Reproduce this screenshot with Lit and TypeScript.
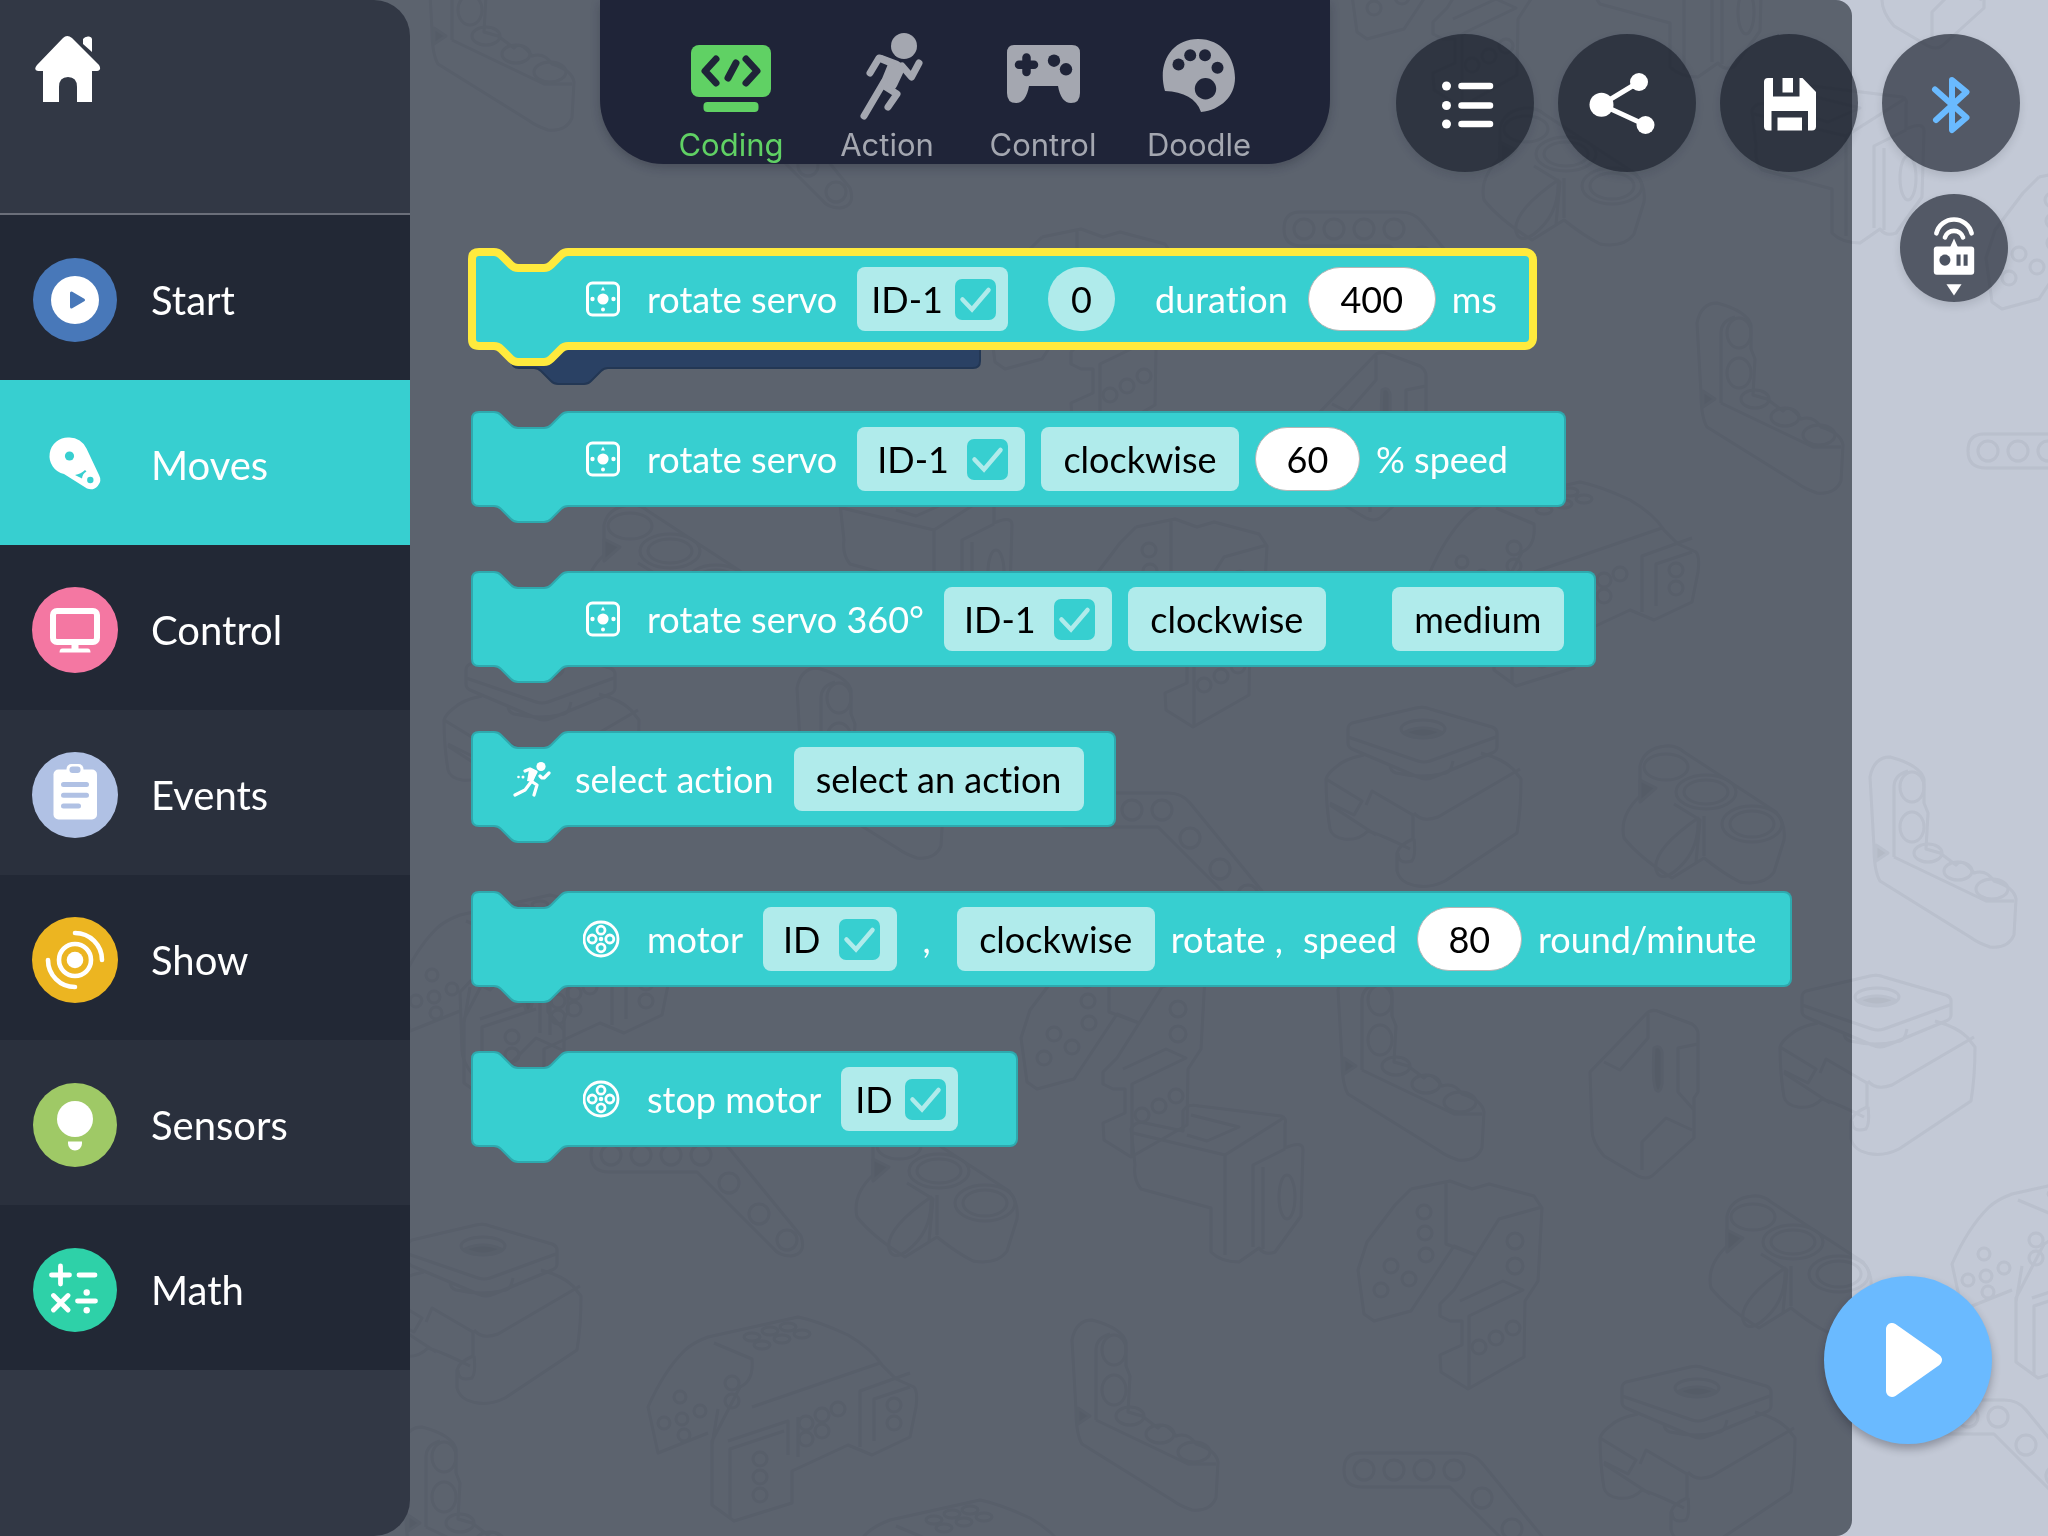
import { LitElement, html, css, svg, nothing } from "lit";
import type { TemplateResult } from "lit";
import { classMap } from "lit/directives/class-map.js";

/* ---------- data ---------- */

type Piece =
  | { kind: "label"; text: string }
  | { kind: "port"; text: string; name: string; size?: string }
  | { kind: "choice"; value: string; options: string[]; name: string; apart?: boolean }
  | { kind: "number"; value: string; name: string; wide?: boolean }
  | { kind: "angle"; value: string };

interface Block {
  icon: "servo" | "motor" | "runner";
  end: "narrow" | "wide" | "wider";
  selected?: boolean;
  pieces: Piece[];
}

const TURN = ["clockwise", "counterclockwise"];

const BLOCKS: Block[] = [
  {
    icon: "servo", end: "narrow", selected: true,
    pieces: [
      { kind: "label", text: "rotate servo" },
      { kind: "port", text: "ID-1", name: "Servo", size: "tight" },
      { kind: "angle", value: "0" },
      { kind: "label", text: "duration" },
      { kind: "number", value: "400", name: "Duration", wide: true },
      { kind: "label", text: "ms" },
    ],
  },
  {
    icon: "servo", end: "wide",
    pieces: [
      { kind: "label", text: "rotate servo" },
      { kind: "port", text: "ID-1", name: "Servo" },
      { kind: "choice", value: "clockwise", options: TURN, name: "Direction" },
      { kind: "number", value: "60", name: "Speed" },
      { kind: "label", text: "% speed" },
    ],
  },
  {
    icon: "servo", end: "narrow",
    pieces: [
      { kind: "label", text: "rotate servo 360°" },
      { kind: "port", text: "ID-1", name: "Servo" },
      { kind: "choice", value: "clockwise", options: TURN, name: "Direction" },
      { kind: "choice", value: "medium", options: ["medium"], name: "Speed", apart: true },
    ],
  },
  {
    icon: "runner", end: "narrow",
    pieces: [
      { kind: "label", text: "select action" },
      { kind: "choice", value: "select an action", options: ["select an action"], name: "Action" },
    ],
  },
  {
    icon: "motor", end: "narrow",
    pieces: [
      { kind: "label", text: "motor" },
      { kind: "port", text: "ID", name: "Motor" },
      { kind: "label", text: "," },
      { kind: "choice", value: "clockwise", options: TURN, name: "Direction" },
      { kind: "label", text: "rotate ," },
      { kind: "label", text: "speed" },
      { kind: "number", value: "80", name: "Speed" },
      { kind: "label", text: "round/minute" },
    ],
  },
  {
    icon: "motor", end: "wider",
    pieces: [
      { kind: "label", text: "stop motor" },
      { kind: "port", text: "ID", name: "Motor", size: "tight" },
    ],
  },
];

/* ---------- category icons ---------- */

const CATEGORIES: { name: string; tone: string; art: TemplateResult }[] = [
  {
    name: "Start", tone: "dark",
    art: svg`<circle cx="43" cy="43" r="42" fill="#4878b9"/><circle cx="43" cy="43" r="24" fill="#fff"/>
      <path d="M39.500 36v14l12-7z" fill="#4878b9" stroke="#4878b9" stroke-width="3" stroke-linejoin="round"/>`,
  },
  {
    name: "Moves", tone: "active",
    art: svg`<path d="M37.500 15.500a18.500 18.500 0 0 1 17 11L67 53a9.600 9.600 0 0 1-12 13.500L32 52a18.500 18.500 0 0 1 5.500-36.500z" fill="#fff"/>
      <circle cx="37.500" cy="34" r="4.600" fill="#37cfd0"/><circle cx="58.300" cy="58" r="3.200" fill="#37cfd0"/>
      <path d="M43 53q6-1 10-5l1.500 1.500q-4 2-4.500 7z" fill="#37cfd0"/>`,
  },
  {
    name: "Control", tone: "dark",
    art: svg`<circle cx="43" cy="43" r="43" fill="#f477a2"/>
      <rect x="21" y="24" width="44" height="31" rx="4" fill="none" stroke="#fff" stroke-width="6"/>
      <path d="M39.500 58h7v3.500h9q3 0 3 4h-31q0-4 3-4h9z" fill="#fff"/>`,
  },
  {
    name: "Events", tone: "soft",
    art: svg`<circle cx="43" cy="43" r="43" fill="#b0c1e4"/>
      <rect x="21.500" y="17.500" width="43.500" height="50" rx="5" fill="#fff"/><rect x="34.500" y="12" width="17" height="14" rx="5" fill="#fff"/>
      <rect x="37.500" y="14.500" width="11" height="6.500" rx="3" fill="#b0c1e4"/>
      <path d="M31.500 32.500h23M31.500 43.300h23M31.500 54h15" stroke="#b0c1e4" stroke-width="5" stroke-linecap="round"/>`,
  },
  {
    name: "Show", tone: "dark",
    art: svg`<circle cx="43" cy="43" r="43" fill="#ecb521"/><circle cx="43" cy="43" r="8.300" fill="#fff"/>
      <g fill="none" stroke="#fff" stroke-width="4.600" stroke-linecap="round"><circle cx="43" cy="43" r="16"/>
      <path d="M43 16a27 27 0 0 1 27 27M43 70a27 27 0 0 1-27-27"/></g>`,
  },
  {
    name: "Sensors", tone: "soft",
    art: svg`<circle cx="43" cy="43" r="42" fill="#9fc966"/><circle cx="43" cy="37" r="18" fill="#fff"/>
      <path d="M36 59.500h14v2a7 7 0 0 1-14 0z" fill="#fff"/>`,
  },
  {
    name: "Math", tone: "dark",
    art: svg`<circle cx="43" cy="43" r="42" fill="#2ed1a8"/>
      <path d="M19.500 28h18M28.500 19v18M47 28h16M21.500 48.500l14.500 14.500M36 48.500L21.500 63M45.500 54h18" stroke="#fff" stroke-width="4.800" stroke-linecap="round"/>
      <circle cx="54.700" cy="45.500" r="3.200" fill="#fff"/><circle cx="54.700" cy="63.300" r="3.200" fill="#fff"/>`,
  },
];

/* ---------- mode tabs ---------- */

const MODES: { name: string; art: TemplateResult }[] = [
  {
    name: "Coding",
    art: svg`<rect x="0" y="15" width="80" height="52" rx="8" fill="currentColor"/>
      <rect x="12.500" y="72" width="55" height="10" rx="4" fill="currentColor"/>
      <path d="M25 29L14 41l11 12M55 29l11 12-11 12M45 33l-8 15" fill="none" stroke="#1f2438" stroke-width="7" stroke-linecap="round" stroke-linejoin="round"/>`,
  },
  {
    name: "Action",
    art: svg`<circle cx="57" cy="16" r="13" fill="currentColor"/>
      <path d="M30 26q2-2 5-1l16 6q6 3 7 8l-8 17q-3 6-9 4l-9-4 9-22z" fill="currentColor"/>
      <path d="M23 43l9-15 12 5M55 36l9.500 11L72 33M37 52L17 86M39 57l11 7-9 13" fill="none" stroke="currentColor" stroke-width="7" stroke-linecap="round" stroke-linejoin="round"/>`,
  },
  {
    name: "Control",
    art: svg`<path fill="currentColor" d="M11 15h58q8 0 8 8v40q0 10-9 10-10 0-13-17H26q-3 17-13 17-9 0-9-10V23q0-8 7-8z"/>
      <path d="M23.500 27.500v14.500M16 34.700h15" stroke="#1f2438" stroke-width="8.500" stroke-linecap="round"/>
      <circle cx="51" cy="30.700" r="6.200" fill="#1f2438"/><circle cx="63" cy="39.300" r="6.200" fill="#1f2438"/>`,
  },
  {
    name: "Doodle",
    art: svg`<path fill="currentColor" d="M6 61C-2 34 12 9 39 9c24 0 37 19 37 39 0 18-14 32-34 34-5-14-17-20-36-21z"/>
      <g fill="#1f2438"><circle cx="19.500" cy="34.500" r="6"/><circle cx="31.200" cy="25.300" r="6"/><circle cx="46" cy="25.300" r="6"/><circle cx="58.500" cy="37.700" r="6"/><circle cx="46.500" cy="58.700" r="10.700"/></g>`,
  },
];

/* ---------- round toolbar buttons ---------- */

const TOOLS: { name: string; art: TemplateResult }[] = [
  {
    name: "Project list",
    art: svg`<g fill="#fff"><circle cx="50.500" cy="52" r="4.500"/><circle cx="50.500" cy="71.500" r="4.500"/><circle cx="50.500" cy="90" r="4.500"/></g>
      <path d="M65.500 52h28.500M65.500 71.500h28.500M65.500 90h28.500" stroke="#fff" stroke-width="6.500" stroke-linecap="round"/>`,
  },
  {
    name: "Share",
    art: svg`<path d="M81 48L43.500 70.700 87.500 91" fill="none" stroke="#fff" stroke-width="5"/>
      <g fill="#fff"><circle cx="43.500" cy="70.700" r="12"/><circle cx="81" cy="48" r="9"/><circle cx="87.500" cy="91" r="9"/></g>`,
  },
  {
    name: "Save",
    art: svg`<path fill="#fff" fill-rule="evenodd" d="M48 44h5v18.500h26.500V44h3L96 58v34.500q0 4-4 4h-4V77H51.500v19.500H48q-4 0-4-4V48q0-4 4-4zM62.500 44h10.500v14.500H62.500zM57.500 83.500h24.500v13H57.500z"/>`,
  },
  {
    name: "Bluetooth",
    art: svg`<path d="M53 55.500L84.500 83.500 70 96V46L84.500 58 54 86" fill="none" stroke="#6abaff" stroke-width="6" stroke-linecap="round" stroke-linejoin="round"/>`,
  },
];

/* ---------- block icons ---------- */

const BLOCK_ICONS: Record<Block["icon"], TemplateResult> = {
  servo: svg`<rect x="4.500" y="4" width="31" height="32" rx="5" fill="none" stroke="#fff" stroke-width="3"/>
    <g fill="#fff"><circle cx="20" cy="20" r="5.600"/><circle cx="9.500" cy="20" r="2.200"/><circle cx="30.500" cy="20" r="2.200"/><circle cx="20" cy="30.500" r="2"/><path d="M20 7.500l2 4h-4z"/></g>`,
  motor: svg`<g fill="none" stroke="#fff" stroke-width="2.800"><circle cx="18" cy="20" r="17"/>
    <circle cx="18" cy="11.200" r="4"/><circle cx="18" cy="28.800" r="4"/><circle cx="9.200" cy="20" r="4"/><circle cx="26.800" cy="20" r="4"/></g><circle cx="18" cy="20" r="2.300" fill="#fff"/>`,
  runner: svg`<circle cx="30" cy="7.500" r="4.600" fill="#fff"/>
    <path d="M14 12l5-2 6 3-5 9 6 4-3 10M20 23l-6 8-10 5M29 17l2 2 2 0 5-5" fill="none" stroke="#fff" stroke-width="3.200" stroke-linecap="round" stroke-linejoin="round"/>
    <path d="M18 11l8 2-4 10-6-1z" fill="#fff"/><circle cx="7.500" cy="18" r="1.300" fill="#fff"/><circle cx="12" cy="18" r="1.500" fill="#fff"/>`,
};

/* ---------- wallpaper of building parts ---------- */

const PARTS = svg`
  <symbol id="servo" overflow="visible">
    <path d="M22 22q0-4 4-6L90 1q8-2 14 1l62 18q5 2 5 6v14q0 4-5 6l-58 24q-8 4-16 0L26 42q-4-2-4-6zM22 30l70 24q6 2 12 0l66-24M64 58q0 6 6 8 26 6 50 0 5-1 7-12M38 48q-20 4-28 12-8 6-10 12 0 26 4 50 2 8 14 10 14 2 24-8 14 4 42 18M155 46q22 6 32 16l8 10q0 30-4 54l-72 48q-20 10-38 2-8-4-10-12V146q2-8 16-14V108L46 84l-6 14M0 72l36 22-8 14-24-12M88 106q8 10 24 4l82-48M4 98l46 30M88 132q2 16-2 22-14 4-14-8"/>
    <ellipse cx="97" cy="22" rx="22" ry="9"/><path d="M79 25q18-8 36 0-18 10-36 0z" fill="#000"/>
  </symbol>
  <symbol id="tri" overflow="visible">
    <path d="M18 34V20Q22 2 44 0q10-1 18 6l92 60q10 12 8 28l-10 32q-10 14-34 10-16-8-36-24l-32 20Q18 112 2 92-3 70 18 50zM52 58l26 16-4 42M82 110V70M34 124q-4-20 42-52 2 34-24 54-14 10-18-2z"/>
    <ellipse cx="44" cy="21" rx="22" ry="13"/><ellipse cx="84" cy="46" rx="30" ry="17"/><ellipse cx="84" cy="46" rx="22" ry="12"/><ellipse cx="130" cy="78" rx="30" ry="18"/><ellipse cx="130" cy="78" rx="22" ry="13"/>
    <path d="M18 34l16 8-16 14z" fill="#000"/>
  </symbol>
  <symbol id="beam" overflow="visible">
    <path d="M16 0H116q14 0 22 10l72 88q6 18-10 20-12 0-18-8L106 34H18Q0 34 0 17 0 0 16 0z"/>
    <circle cx="20" cy="17" r="10"/><circle cx="50" cy="17" r="10"/><circle cx="80" cy="17" r="10"/><circle cx="110" cy="17" r="10"/><circle cx="138" cy="45" r="10"/><circle cx="168" cy="76" r="10"/><circle cx="196" cy="102" r="10"/>
  </symbol>
  <symbol id="bracket" overflow="visible">
    <path d="M36 34q8-8 24-14L150 0q20 4 50 18 24 14 34 30l14 14 18 8q4 4 2 20l-6 30-38 18-24-10-56 26v32L86 204l-22-16V124l28-54q14-6 12-28L66 26M36 34Q16 54 0 90l10 46 50-20M104 90l128-44M80 124l60-20v34M212 130V74l50-18M226 124V82l36-12M82 200V132l54-18M150 100v40M70 92l-6 36"/>
    <circle cx="32" cy="80" r="6"/><circle cx="52" cy="94" r="6"/><circle cx="34" cy="102" r="6"/><circle cx="16" cy="106" r="6"/><circle cx="84" cy="66" r="7"/><circle cx="84" cy="84" r="7"/><circle cx="36" cy="118" r="6"/>
    <circle cx="112" cy="142" r="7"/><circle cx="112" cy="160" r="7"/><circle cx="112" cy="178" r="7"/><circle cx="158" cy="106" r="7"/><circle cx="174" cy="98" r="7"/><circle cx="158" cy="122" r="7"/><circle cx="174" cy="114" r="7"/><circle cx="190" cy="92" r="7"/><circle cx="246" cy="88" r="7"/><circle cx="246" cy="106" r="7"/>
    <ellipse cx="104" cy="20" rx="8" ry="4"/><ellipse cx="122" cy="14" rx="8" ry="4"/><ellipse cx="140" cy="10" rx="8" ry="4"/><ellipse cx="114" cy="28" rx="8" ry="4"/><ellipse cx="134" cy="22" rx="8" ry="4"/><ellipse cx="154" cy="17" rx="8" ry="4"/>
  </symbol>
  <symbol id="elbow" overflow="visible">
    <path d="M0 20Q4 0 20 0q30 8 34 22v24l4 10-2 36 14 4 16 12q6-8 18 8 12-4 20 8 20 6 22 18l-2 36q-6 14-24 12-12-4-20-10L10 124Q4 114 4 90zM24 100l92 44h28M24 100V30q0-12 14-16"/>
    <ellipse cx="42" cy="30" rx="12" ry="15"/><ellipse cx="42" cy="70" rx="12" ry="15"/><ellipse cx="58" cy="96" rx="14" ry="9"/><ellipse cx="88" cy="114" rx="14" ry="9"/><ellipse cx="122" cy="132" rx="16" ry="10"/>
    <path d="M6 88l12 8-12 8z" fill="#000"/>
  </symbol>
  <symbol id="plate" overflow="visible">
    <path d="M0 62L56 4q6-6 14-2l32 12q6 4 6 10v58l-4 6v40l-42 38q-6 4-14 0l-34-20Q2 132 2 120zM58 4v24L30 60 14 52M108 34l-20 4v44l16 18M52 160v-28l24-24 26 12"/>
    <path d="M64 38q6-4 8 4v32q-2 10-6 6-4-8-2-42z" fill="#000"/>
  </symbol>
  <symbol id="tee" overflow="visible">
    <path d="M0 24Q4 16 14 18l38 8V6Q56-2 68 1l82 10q6 2 4 8v24q18-8 18 2l-2 66-26 36q-10 4-16-4l-20 14q-18 0-28-10v-44L10 84Q2 74 4 60zM2 28l92 22 60-38M94 50v100M60 10l48 12-32 14-20-6M122 142V60l32-16M132 144V62"/>
    <ellipse cx="156" cy="92" rx="8" ry="22"/>
  </symbol>
  <symbol id="fork" overflow="visible">
    <path d="M54 7L93-1l22 8 17-5 45 12 8 12-4 73-13 20-1 56-56 32-27-17-1-17 22-10v-24l-12 0-10-5v-12l14-14 45-71 43-12M54 7L38 23 10 60 1 88l6 44 10 7 37-10 43-65 22 9M89 0v62l30 11M103 119l43-20 20 9-54 26v72"/>
    <circle cx="67" cy="30" r="7"/><circle cx="68" cy="51" r="7"/><circle cx="69" cy="73" r="7"/><circle cx="52" cy="97" r="7"/><circle cx="34" cy="84" r="7"/><circle cx="24" cy="108" r="7"/><circle cx="158" cy="59" r="8"/><circle cx="158" cy="84" r="8"/><circle cx="122" cy="165" r="7"/><circle cx="139" cy="156" r="7"/><circle cx="156" cy="146" r="7"/>
  </symbol>`;

const PLACED: [string, number, number][] = [
  ["servo", 1326, 707], ["servo", 1780, 975], ["servo", 1600, 1366], ["servo", 386, 1224], ["servo", 444, 648],
  ["tri", 1622, 746], ["tri", 1709, 1196], ["tri", 855, 1125], ["tri", 1482, 108], ["tri", 586, 505],
  ["beam", 591, 1138], ["beam", 1344, 1453], ["beam", 1052, 793], ["beam", 1968, 434], ["beam", 1888, 1400], ["beam", 1284, 212], ["beam", 640, 90],
  ["bracket", 648, 1317], ["bracket", 1430, 482], ["bracket", 1952, 1174], ["bracket", 830, 1500], ["bracket", 400, 895],
  ["elbow", 1072, 1320], ["elbow", 402, 1427], ["elbow", 1697, 303], ["elbow", 1870, 757], ["elbow", 1338, 970], ["elbow", 797, 668], ["elbow", 428, -60],
  ["plate", 1590, 1010], ["plate", 1318, 352], ["plate", 460, 930], ["plate", 1880, -120],
  ["tee", 1131, 1105], ["tee", 1752, 86], ["tee", 840, 480], ["tee", 1590, -80],
  ["fork", 1357, 1182], ["fork", 988, 230], ["fork", 1082, 520], ["fork", 1985, 170], ["fork", 1350, -100], ["fork", 1020, 950],
];

/* ---------- one stackable block ---------- */

class CodeBlock extends LitElement {
  static properties = { block: { attribute: false } };
  declare block: Block;

  static styles = css`
    :host { display: block; }
    .block {
      position: relative;
      display: flex;
      align-items: center;
      width: max-content;
      height: 96px;
      box-sizing: border-box;
      padding-left: 112px;
      color: #fff;
      font: 36px/48px Lato, "Open Sans", sans-serif;
      font-variant-ligatures: none;
      --edge: #2ea9ae;
      --edge-width: 2px;
    }
    .runner { padding-left: 40px; }
    .narrow { padding-right: 32px; }
    .wide { padding-right: 54px; }
    .wider { padding-right: 60px; }
    .selected { --edge: #ffea3d; --edge-width: 8px; }
    .cap {
      position: absolute;
      left: 0;
      top: 0;
      width: 100px;
      height: 112px;
      overflow: visible;
    }
    .cap-shape { fill: #37cfd0; stroke: var(--edge); stroke-width: var(--edge-width); }
    .body {
      position: absolute;
      inset: 0 0 0 99px;
      border: solid var(--edge);
      border-width: 2px 2px 2px 0;
      border-radius: 0 8px 8px 0;
      background: #37cfd0;
    }
    .selected .body {
      inset: -3px -4px -3px 99px;
      border-width: 8px 8px 8px 0;
      border-radius: 0 12px 12px 0;
    }
    .row { position: relative; display: flex; align-items: center; gap: 16px; }
    .icon { width: 40px; height: 40px; margin-right: 8px; }
    .label { margin-right: 4px; white-space: pre; }
    .comma { margin: 0 10px; }
    .chip, .choice, .angle {
      display: flex;
      align-items: center;
      justify-content: center;
      height: 64px;
      box-sizing: border-box;
      border: 0;
      border-radius: 8px;
      background: #b0ebeb;
      color: #000;
      font: inherit;
      font-variant-ligatures: none;
    }
    .chip { padding: 0 17px 0 20px; gap: 18px; }
    .chip.tight { padding: 0 12px 0 14px; gap: 12px; }
    .choice { appearance: none; padding: 0 22px; text-align: center; }
    .apart { margin-left: 50px; }
    .angle { width: 67px; margin: 0 24px; padding: 0; border-radius: 32px; }
    .number {
      width: 105px;
      height: 64px;
      box-sizing: border-box;
      padding: 0;
      border: 1px solid #b5b5b5;
      border-radius: 32px;
      background: #fff;
      color: #000;
      font: inherit;
      text-align: center;
    }
    .number.broad { width: 128px; }
    .tick { display: grid; width: 41px; height: 41px; }
    .box, .mark { grid-area: 1 / 1; }
    .box { appearance: none; margin: 0; border-radius: 7px; background: #37cfd0; }
    .mark { pointer-events: none; opacity: 0; }
    .box:checked + .mark { opacity: 1; }
  `;

  private piece(p: Piece) {
    switch (p.kind) {
      case "label":
        return html`<span class=${classMap({ label: true, comma: p.text === "," })}>${p.text}</span>`;
      case "port":
        return html`<label class="chip ${p.size ?? ""}">${p.text}
          <span class="tick">
            <input class="box" type="checkbox" checked />
            <svg class="mark" viewBox="0 0 41 41" aria-hidden="true">
              <path d="M7.500 20.500l9.500 10L33.500 11" fill="none" stroke="#b0ebeb" stroke-width="4.500" stroke-linecap="round" />
            </svg>
          </span>
        </label>`;
      case "choice": {
        return html`<select class=${classMap({ choice: true, apart: !!p.apart })} aria-label=${p.name}>
          <option selected>${p.value}</option>
        </select>`;
      }
      case "number":
        return html`<input class=${classMap({ number: true, broad: !!p.wide })} type="text" inputmode="numeric"
          aria-label=${p.name} .value=${p.value} />`;
      case "angle":
        return html`<button class="angle" type="button">${p.value}</button>`;
    }
  }

  render() {
    const { icon, end, selected, pieces } = this.block;
    return html`
      <div class="block ${icon} ${end} ${selected ? "selected" : ""}">
        <div class="body"></div>
        <svg class="cap" viewBox="0 0 100 112" aria-hidden="true">
          <path class="cap-shape" d="M100 1H97Q93 1 90 4L80 14Q77 17 73 17H47Q43 17 40 14L30 4Q27 1 23 1H8Q1 1 1 8V88Q1 95 8 95H23Q27 95 30 98L40 108Q43 111 47 111H73Q77 111 80 108L90 98Q93 95 97 95H100" />
        </svg>
        <div class="row">
          <svg class="icon" viewBox="0 0 40 40" aria-hidden="true">${BLOCK_ICONS[icon]}</svg>
          ${pieces.map((p) => this.piece(p))}
        </div>
      </div>`;
  }
}
customElements.define("code-block", CodeBlock);

/* ---------- page ---------- */

class AppRoot extends LitElement {
  static properties = { category: { state: true }, mode: { state: true } };
  declare category: string;
  declare mode: string;

  constructor() {
    super();
    this.category = "Moves";
    this.mode = "Coding";
  }

  static styles = css`
    :host { display: block; }
    .page {
      position: relative;
      display: flex;
      min-height: 100vh;
      box-sizing: border-box;
      overflow: hidden;
      background: #c3c9d6;
    }
    .paper {
      position: absolute;
      inset: 0;
      width: 100%;
      height: 100%;
    }
    .parts { fill: none; stroke: #4d5563; stroke-width: 3; stroke-linejoin: round; opacity: 0.075; }
    .drawer {
      position: relative;
      flex: 1;
      display: flex;
      margin-right: 196px;
      border-radius: 0 16px 16px 0;
      background: rgba(8, 14, 25, 0.55);
    }
    .side {
      flex: 0 0 410px;
      display: flex;
      flex-direction: column;
      border-radius: 0 36px 36px 0;
      background: #323845;
    }
    .top {
      height: 215px;
      box-sizing: border-box;
      padding: 36px 35px;
      border-bottom: 2px solid #6b6f7a;
    }
    .home { display: block; padding: 0; border: 0; background: none; }
    .home-icon { display: block; width: 66px; height: 66px; }
    .cat {
      display: flex;
      align-items: center;
      gap: 33px;
      width: 100%;
      height: 165px;
      padding: 5px 32px 0;
      box-sizing: border-box;
      border: 0;
      color: #fff;
      font: 40px/48px Lato, "Open Sans", sans-serif;
      text-align: left;
    }
    .dark { background: #222835; }
    .soft { background: #2a303d; }
    .active { background: #37cfd0; }
    .cat-icon { width: 86px; height: 86px; }
    .stack {
      position: relative;
      flex: 1;
      display: flex;
      flex-direction: column;
      gap: 64px;
      padding: 251px 0 64px 61px;
    }
    .under {
      position: absolute;
      left: 101px;
      top: 273px;
      width: 470px;
      height: 112px;
    }
    .bar {
      position: absolute;
      top: 0;
      left: 600px;
      right: 28px;
      display: flex;
      align-items: flex-start;
      justify-content: space-between;
    }
    .modes {
      display: flex;
      padding: 30px 53px 0;
      height: 164px;
      box-sizing: border-box;
      border-radius: 0 0 64px 64px;
      background: #1f2438;
      box-shadow: 0 4px 10px rgba(20, 24, 36, 0.25);
    }
    .mode {
      display: flex;
      flex-direction: column;
      align-items: center;
      width: 156px;
      padding: 0;
      border: 0;
      background: none;
      color: #a4a7b0;
      font: 31px/36px Inter, "Liberation Sans", sans-serif;
    }
    .mode.on { color: #60d164; }
    .mode-icon { width: 80px; height: 90px; margin-bottom: 7px; }
    .tools {
      display: grid;
      grid-template-columns: repeat(4, 138px);
      gap: 22px 24px;
      padding-top: 34px;
    }
    .tool {
      width: 138px;
      height: 138px;
      padding: 0;
      border: 0;
      border-radius: 50%;
      background: rgba(23, 29, 42, 0.65);
      box-shadow: 0 4px 8px rgba(20, 24, 36, 0.12);
    }
    .tool-icon { display: block; width: 100%; height: 100%; }
    .remote {
      grid-column: 4;
      justify-self: end;
      width: 108px;
      height: 108px;
      margin-right: 12px;
    }
    .run {
      position: absolute;
      right: 56px;
      bottom: 92px;
      width: 168px;
      height: 168px;
      padding: 0;
      border: 0;
      border-radius: 50%;
      background: #6abaff;
      box-shadow: 0 5px 8px rgba(20, 24, 36, 0.3);
    }
  `;

  render() {
    return html`
      <div class="page">
        <svg class="paper" viewBox="0 0 2048 1536" preserveAspectRatio="xMidYMid slice" aria-hidden="true">
          <defs>${PARTS}</defs>
          <g class="parts">
            ${PLACED.map(([id, x, y]) => svg`<use href="#${id}" x=${x} y=${y} />`)}
          </g>
        </svg>

        <main class="drawer">
          <nav class="side" aria-label="Block categories">
            <div class="top">
              <button class="home" type="button" aria-label="Home">
                <svg class="home-icon" viewBox="0 0 66 66" aria-hidden="true">
                  <path fill="#fff" d="M2 29L28 2q4-4 9 0l27 27q3 5-2 6h-5v31H42V51q0-10-9-10t-9 10v15H8V35H3q-5-1-1-6zM48 3q2-3 6-2.500 3 .500 3 3V16l-9-8z" />
                </svg>
              </button>
            </div>
            ${CATEGORIES.map(
              (c) => html`
                <button
                  type="button"
                  class="cat ${c.tone}"
                  aria-current=${c.name === this.category ? "true" : nothing}
                  @click=${() => (this.category = c.name)}
                >
                  <svg class="cat-icon" viewBox="0 0 86 86" aria-hidden="true">${c.art}</svg>
                  <span>${c.name}</span>
                </button>`,
            )}
          </nav>
          <section class="stack" aria-label="Moves blocks">
            <svg class="under" viewBox="0 0 470 112" aria-hidden="true">
              <path d="M8 1H462Q469 1 469 8V88Q469 95 462 95H97Q93 95 90 98L80 108Q77 111 73 111H47Q43 111 40 108L30 98Q27 95 23 95H8Q1 95 1 88V8Q1 1 8 1z" fill="#2a4164" stroke="#233754" stroke-width="2" />
            </svg>
            ${BLOCKS.map((b) => html`<code-block .block=${b}></code-block>`)}
          </section>
        </main>

        <header class="bar">
          <nav class="modes" aria-label="Modes">
            ${MODES.map(
              (m) => html`
                <button type="button" class=${classMap({ mode: true, on: m.name === this.mode })}
                  @click=${() => (this.mode = m.name)}>
                  <svg class="mode-icon" viewBox="0 0 80 90" aria-hidden="true">${m.art}</svg>
                  <span>${m.name}</span>
                </button>`,
            )}
          </nav>
          <div class="tools">
            ${TOOLS.map(
              (t) => html`
                <button type="button" class="tool" aria-label=${t.name}>
                  <svg class="tool-icon" viewBox="0 0 138 138" aria-hidden="true">${t.art}</svg>
                </button>`,
            )}
            <button type="button" class="tool remote" aria-label="Robot controller">
              <svg class="tool-icon" viewBox="0 0 107 107" aria-hidden="true">
                <g fill="none" stroke="#fff" stroke-width="4.500" stroke-linecap="round">
                  <path d="M36 39a18 18 0 0 1 35 0M44.500 43a9.500 9.500 0 0 1 18 0" />
                </g>
                <path d="M53.500 44l4 9h-8z" fill="#fff" />
                <rect x="33.500" y="52" width="40" height="28" rx="3" fill="#fff" />
                <circle cx="44.500" cy="65.500" r="5.500" fill="#4c5361" />
                <path d="M56 60h4v11h-4zM63 60h4v11h-4z" fill="#4c5361" />
                <path d="M46 89.500h15l-7.500 11z" fill="#fff" />
              </svg>
            </button>
          </div>
        </header>

        <button type="button" class="run" aria-label="Run program">
          <svg class="tool-icon" viewBox="0 0 168 168" aria-hidden="true">
            <path d="M68 53v62l44-31z" fill="#fff" stroke="#fff" stroke-width="12" stroke-linejoin="round" />
          </svg>
        </button>
      </div>`;
  }
}
customElements.define("app-root", AppRoot);
